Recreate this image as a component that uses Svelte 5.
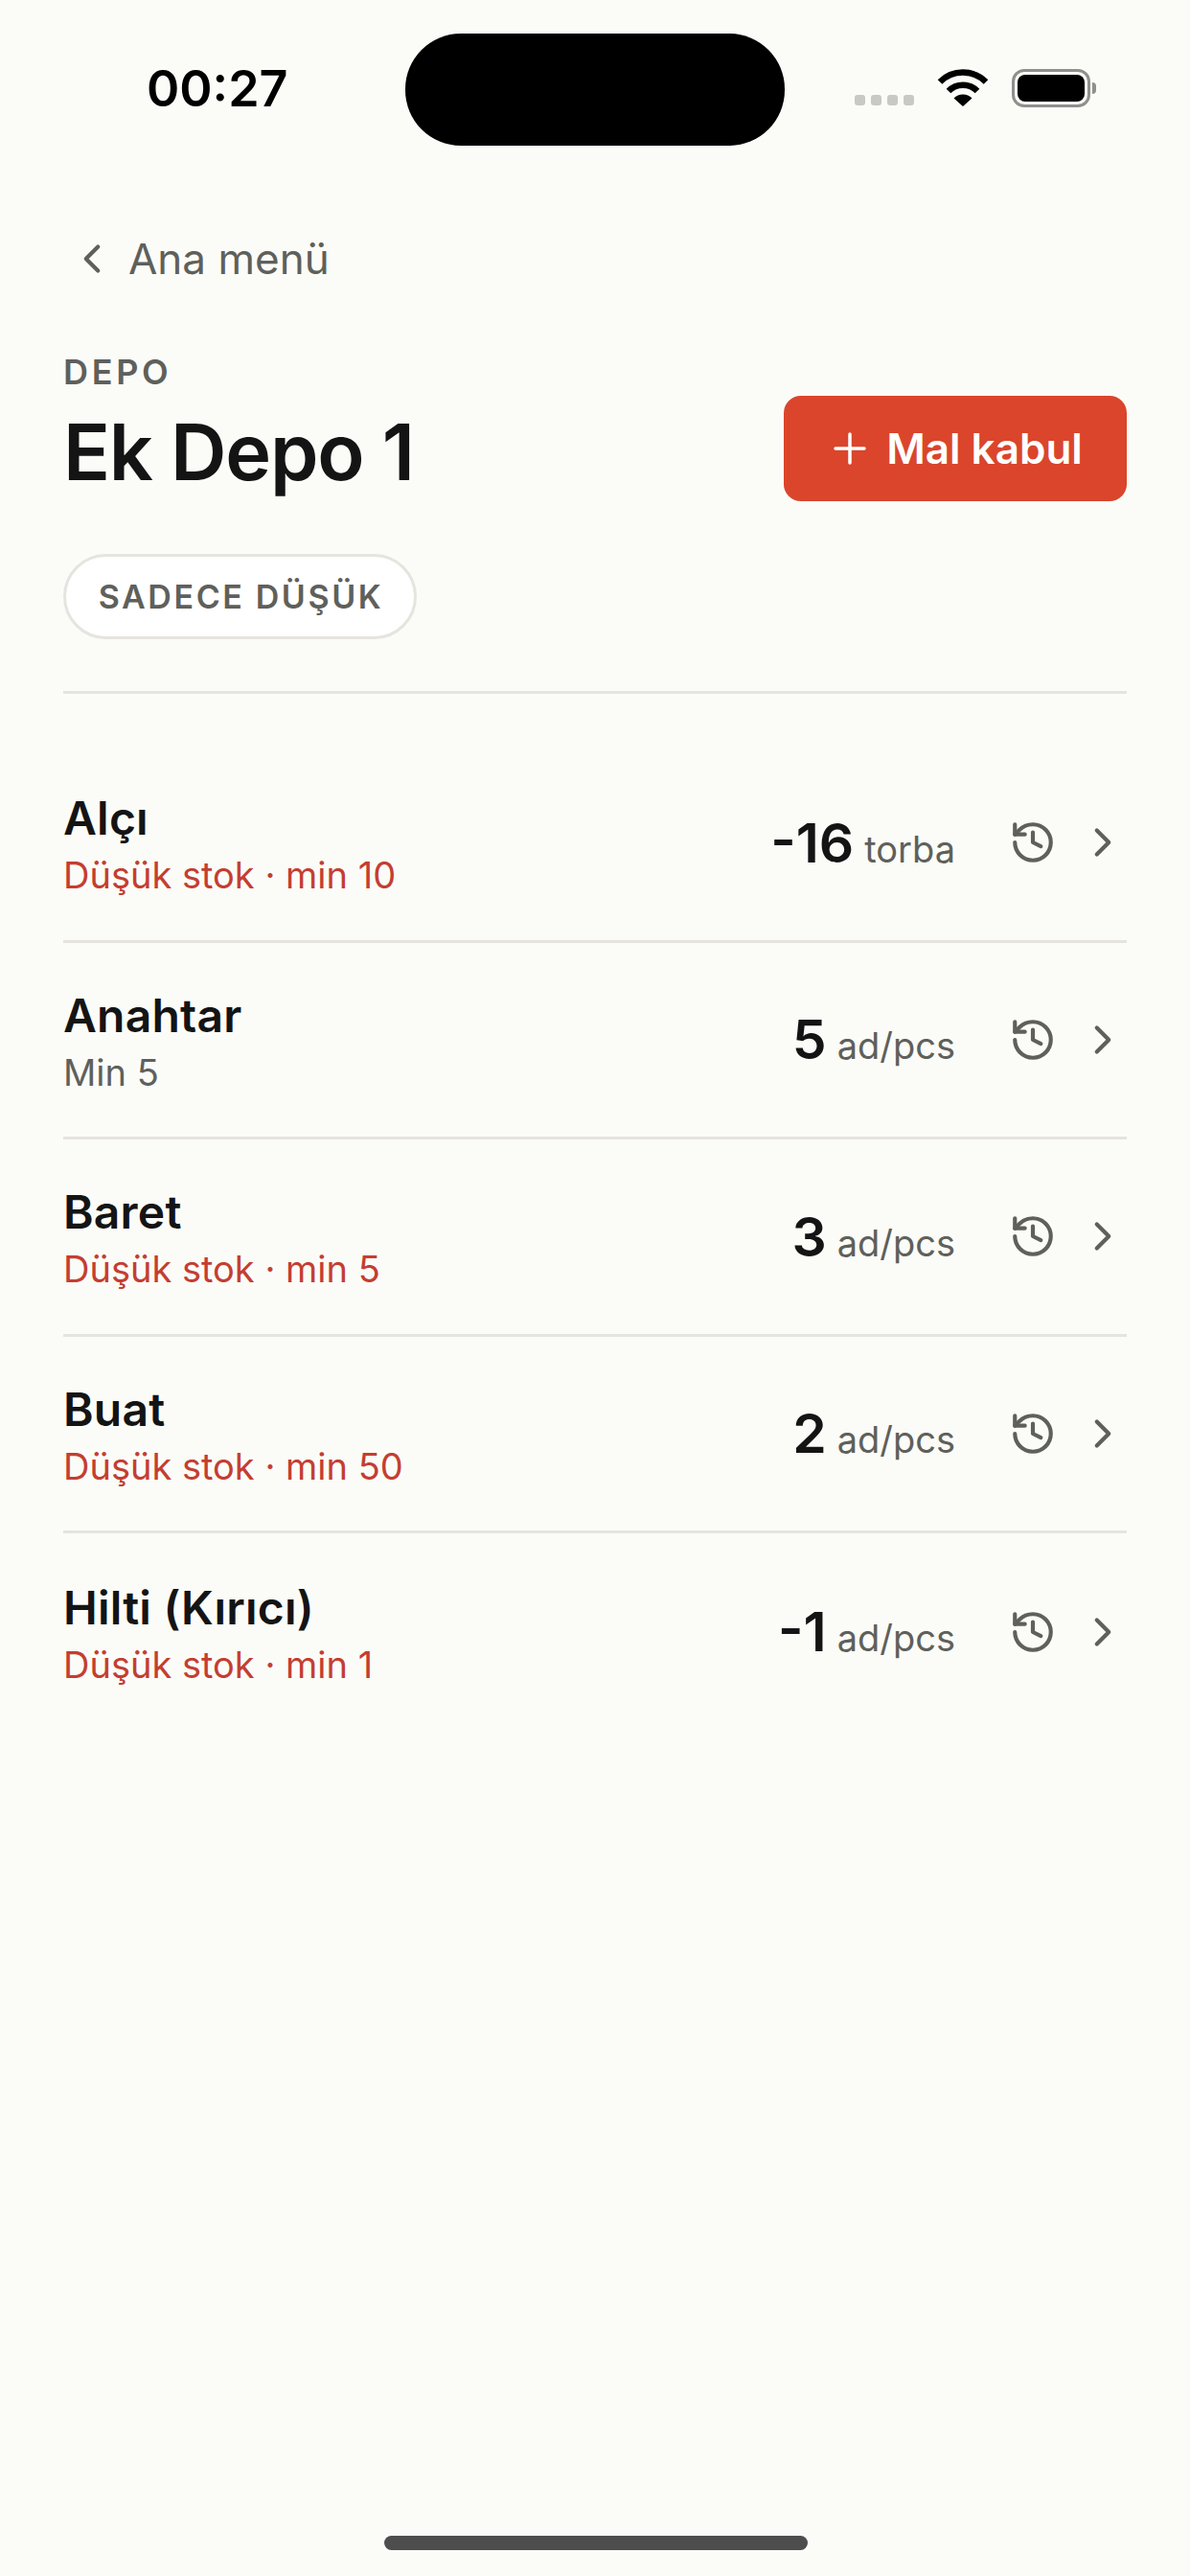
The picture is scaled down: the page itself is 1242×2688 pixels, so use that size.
<script>
  const items = [
    { name: 'Alçı', low: true, min: 10, qty: '-16', unit: 'torba' },
    { name: 'Anahtar', low: false, min: 5, qty: '5', unit: 'ad/pcs' },
    { name: 'Baret', low: true, min: 5, qty: '3', unit: 'ad/pcs' },
    { name: 'Buat', low: true, min: 50, qty: '2', unit: 'ad/pcs' },
    { name: 'Hilti (Kırıcı)', low: true, min: 1, qty: '-1', unit: 'ad/pcs' }
  ];
</script>

<div class="page">
  <div class="status">
    <span class="time">00:27</span>
    <div class="island"></div>
    <div class="status-icons">
      <div class="dots"><i></i><i></i><i></i><i></i></div>
      <svg class="wifi" width="54" height="40" viewBox="0 0 54 40">
        <path d="M3 13.5a34 34 0 0 1 48 0" fill="none" stroke="#000" stroke-width="6.5"/>
        <path d="M12 23a21 21 0 0 1 30 0" fill="none" stroke="#000" stroke-width="6.5"/>
        <path d="M27 39l-9.500-8.500a13.500 13.500 0 0 1 19 0z" fill="#000"/>
      </svg>
      <div class="battery"><div class="cell"></div></div>
      <div class="cap"></div>
    </div>
  </div>

  <div class="content">
    <div class="back">
      <svg width="50" height="50" viewBox="0 0 24 24" fill="none" stroke="#5f605b" stroke-width="2" stroke-linecap="round" stroke-linejoin="round"><path d="m15 18-6-6 6-6"/></svg>
      <span>Ana menü</span>
    </div>

    <div class="head">
      <div>
        <div class="eyebrow">DEPO</div>
        <h1>Ek Depo 1</h1>
      </div>
      <button class="accept">
        <svg width="36" height="36" viewBox="0 0 36 36" fill="none" stroke="#fff" stroke-width="3.5" stroke-linecap="round"><path d="M18 3v30M3 18h30"/></svg>
        <span>Mal kabul</span>
      </button>
    </div>

    <button class="pill">SADECE DÜŞÜK</button>

    <div class="list">
      {#each items as item}
        <div class="row">
          <div class="info">
            <div class="name">{item.name}</div>
            {#if item.low}
              <div class="sub low">Düşük stok · min {item.min}</div>
            {:else}
              <div class="sub">Min {item.min}</div>
            {/if}
          </div>
          <div class="qty"><b>{item.qty}</b><span>{item.unit}</span></div>
          <svg class="hist" width="50" height="50" viewBox="0 0 24 24" fill="none" stroke="#5f605b" stroke-width="2" stroke-linecap="round" stroke-linejoin="round">
            <path d="M3 12a9 9 0 1 0 9-9 9.750 9.750 0 0 0-6.740 2.740L3 8"/>
            <path d="M3 3v5h5"/>
            <path d="M12 7v5l4 2"/>
          </svg>
          <svg class="chev" width="50" height="50" viewBox="0 0 24 24" fill="none" stroke="#5f605b" stroke-width="2" stroke-linecap="round" stroke-linejoin="round"><path d="m9 18 6-6-6-6"/></svg>
        </div>
      {/each}
    </div>
  </div>

  <div class="home"></div>
</div>

<style>
  :global(body) {
    margin: 0;
    background: #fbfcf8;
  }

  .page {
    position: relative;
    height: 2688px;
    background: #fbfcf8;
    font-family: Inter, "Liberation Sans", sans-serif;
    color: #141414;
    overflow: hidden;
  }

  .status {
    height: 186px;
    display: flex;
    align-items: flex-start;
  }

  .time {
    margin: 65px 0 0 153px;
    width: 270px;
    font-size: 52px;
    line-height: 56px;
    font-weight: 600;
    color: #000;
  }

  .island {
    margin-top: 35px;
    width: 396px;
    height: 117px;
    border-radius: 58px;
    background: #000;
  }

  .status-icons {
    margin: 72px 0 0 71px;
    display: flex;
    align-items: center;
    height: 40px;
  }

  .dots {
    display: flex;
    gap: 6px;
    margin: 24px 24px 0 2px;
  }

  .dots i {
    width: 11px;
    height: 11px;
    border-radius: 3px;
    background: #c8c9c4;
  }

  .battery {
    box-sizing: border-box;
    margin-left: 24px;
    width: 82px;
    height: 40px;
    padding: 3px;
    border: 3px solid #8f8f8c;
    border-radius: 13px;
  }

  .cell {
    height: 100%;
    border-radius: 8px;
    background: #000;
  }

  .cap {
    margin-left: 2px;
    width: 4px;
    height: 12px;
    border-radius: 0 4px 4px 0;
    background: #8f8f8c;
  }

  .content {
    padding: 0 66px;
  }

  .back {
    height: 54px;
    margin: 57px 0 0 0;
    display: flex;
    align-items: center;
    gap: 13px;
    font-size: 44px;
    color: #5f605b;
  }

  .back svg {
    margin-left: 5px;
  }

  .head {
    margin-top: 69px;
    display: flex;
    justify-content: space-between;
    align-items: flex-start;
  }

  .eyebrow {
    font-size: 36px;
    line-height: 44px;
    font-weight: 600;
    letter-spacing: 3.700px;
    color: #5f605b;
  }

  h1 {
    margin: 14px 0 0;
    font-size: 81px;
    line-height: 96px;
    font-weight: 600;
    letter-spacing: -1.200px;
  }

  .accept {
    margin-top: 47px;
    width: 358px;
    height: 110px;
    padding: 0 0 0 5px;
    display: flex;
    align-items: center;
    justify-content: center;
    gap: 20px;
    border: none;
    border-radius: 18px;
    background: #da452b;
    color: #fff;
    font: 600 44px Inter, "Liberation Sans", sans-serif;
  }

  .pill {
    display: block;
    margin-top: 55px;
    box-sizing: border-box;
    width: 369px;
    height: 89px;
    padding: 0 0 0 2px;
    border: 3px solid #e6e4df;
    border-radius: 45px;
    background: #fff;
    color: #5f605b;
    font: 600 34px Inter, "Liberation Sans", sans-serif;
    letter-spacing: 2.600px;
  }

  .list {
    margin-top: 54px;
    border-top: 3px solid #e6e4df;
    padding-top: 54px;
  }

  .row {
    box-sizing: border-box;
    height: 205.500px;
    display: flex;
    align-items: center;
    border-bottom: 3px solid #e6e4df;
  }

  .row:last-child {
    border-bottom: none;
  }

  .info {
    flex: 1;
    margin-top: 3px;
  }

  .name {
    font-size: 48px;
    line-height: 58px;
    font-weight: 600;
    letter-spacing: 0.200px;
  }

  .sub {
    margin-top: 7px;
    font-size: 38px;
    line-height: 46px;
    color: #5f605b;
  }

  .low {
    color: #c43e31;
  }

  .qty {
    display: flex;
    align-items: baseline;
    gap: 11px;
    color: #5f605b;
    font-size: 38px;
  }

  .qty b {
    font-size: 57px;
    font-weight: 600;
    color: #141414;
  }

  .hist {
    margin-left: 56px;
  }

  .chev {
    margin-left: 23px;
  }

  .home {
    position: absolute;
    left: 401px;
    top: 2646px;
    width: 442px;
    height: 15px;
    border-radius: 8px;
    background: #4d4d4d;
  }
</style>
